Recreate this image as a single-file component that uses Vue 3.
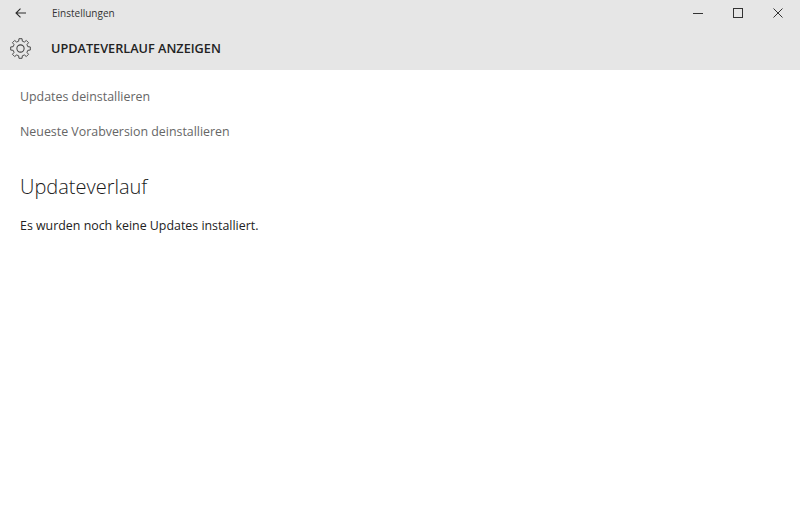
<script setup>
const links = ['Updates deinstallieren', 'Neueste Vorabversion deinstallieren'];

// 8 tooth gear outline, tooth on top
const gearPath = (() => {
  const pts = [];
  const at = (r, deg) => {
    const a = ((deg - 90) * Math.PI) / 180;
    return `${(11 + r * Math.cos(a)).toFixed(2)} ${(11 + r * Math.sin(a)).toFixed(2)}`;
  };
  for (let i = 0; i < 8; i++) {
    const c = i * 45;
    pts.push(at(7.9, c - 14), at(10.4, c - 9), at(10.4, c + 9), at(7.9, c + 14));
  }
  return `M${pts.join('L')}Z`;
})();
</script>

<template>
  <div class="window">
    <header class="header">
      <div class="titlebar">
        <svg class="back" width="11" height="10" viewBox="0 0 11 10">
          <path d="M11 5H1M5.5 .6L1 5l4.5 4.4" fill="none" stroke="#2a2a2a" stroke-width="1.1" />
        </svg>
        <span class="app-name">Einstellungen</span>
        <div class="controls">
          <svg width="10" height="10" viewBox="0 0 10 10" class="ctl ctl-min">
            <path d="M0 5.5h10" stroke="#333" stroke-width="1" fill="none" />
          </svg>
          <svg width="10" height="10" viewBox="0 0 10 10" class="ctl ctl-max">
            <rect x="0.5" y="0.5" width="9" height="9" stroke="#333" stroke-width="1" fill="none" />
          </svg>
          <svg width="10" height="10" viewBox="0 0 10 10" class="ctl">
            <path d="M0.5 0.5l9 9M9.5 0.5l-9 9" stroke="#333" stroke-width="1" fill="none" />
          </svg>
        </div>
      </div>
      <div class="pagebar">
        <svg class="gear" width="21" height="21" viewBox="0 0 22 22">
          <path :d="gearPath" fill="none" stroke="#444" stroke-width="1" stroke-linejoin="round" />
          <circle cx="11" cy="11" r="3.8" fill="none" stroke="#444" stroke-width="1.1" />
        </svg>
        <h1 class="page-title">UPDATEVERLAUF ANZEIGEN</h1>
      </div>
    </header>
    <main class="content">
      <a v-for="link in links" :key="link" class="link">{{ link }}</a>
      <h2 class="section">Updateverlauf</h2>
      <p class="note">Es wurden noch keine Updates installiert.</p>
    </main>
  </div>
</template>

<style scoped>
.window {
  width: 800px;
  height: 511px;
  background: #fff;
  font-family: "Open Sans", "Noto Sans", sans-serif;
  overflow: hidden;
}
.header {
  height: 70px;
  background: #e6e6e6;
}
.titlebar {
  display: flex;
  align-items: center;
  height: 26px;
  padding-left: 15px;
}
.app-name {
  margin-left: 26px;
  font-size: 10px;
  color: #333;
}
.controls {
  margin-left: auto;
  display: flex;
  align-items: center;
  padding-right: 17px;
  gap: 30px;
}
.pagebar {
  display: flex;
  align-items: center;
  height: 44px;
  padding: 0 0 0 10px;
}
.gear {
  flex: none;
}
.page-title {
  margin: 0 0 0 20px;
  font-size: 12.7px;
  font-weight: 600;
  color: #222;
}
.content {
  display: flex;
  flex-direction: column;
  align-items: flex-start;
  padding-left: 20px;
}
.link {
  font-size: 12.4px;
  color: #666;
  line-height: 18px;
  margin-top: 17px;
}
.link:first-child {
  margin-top: 18px;
}
.section {
  margin: 32px 0 0;
  font-size: 20px;
  font-weight: 300;
  line-height: 28px;
  color: #1a1a1a;
}
.note {
  margin: 16px 0 0;
  font-size: 12.4px;
  line-height: 18px;
  color: #222;
}
</style>

<style>
html, body {
  margin: 0;
  background: #fff;
}
</style>
